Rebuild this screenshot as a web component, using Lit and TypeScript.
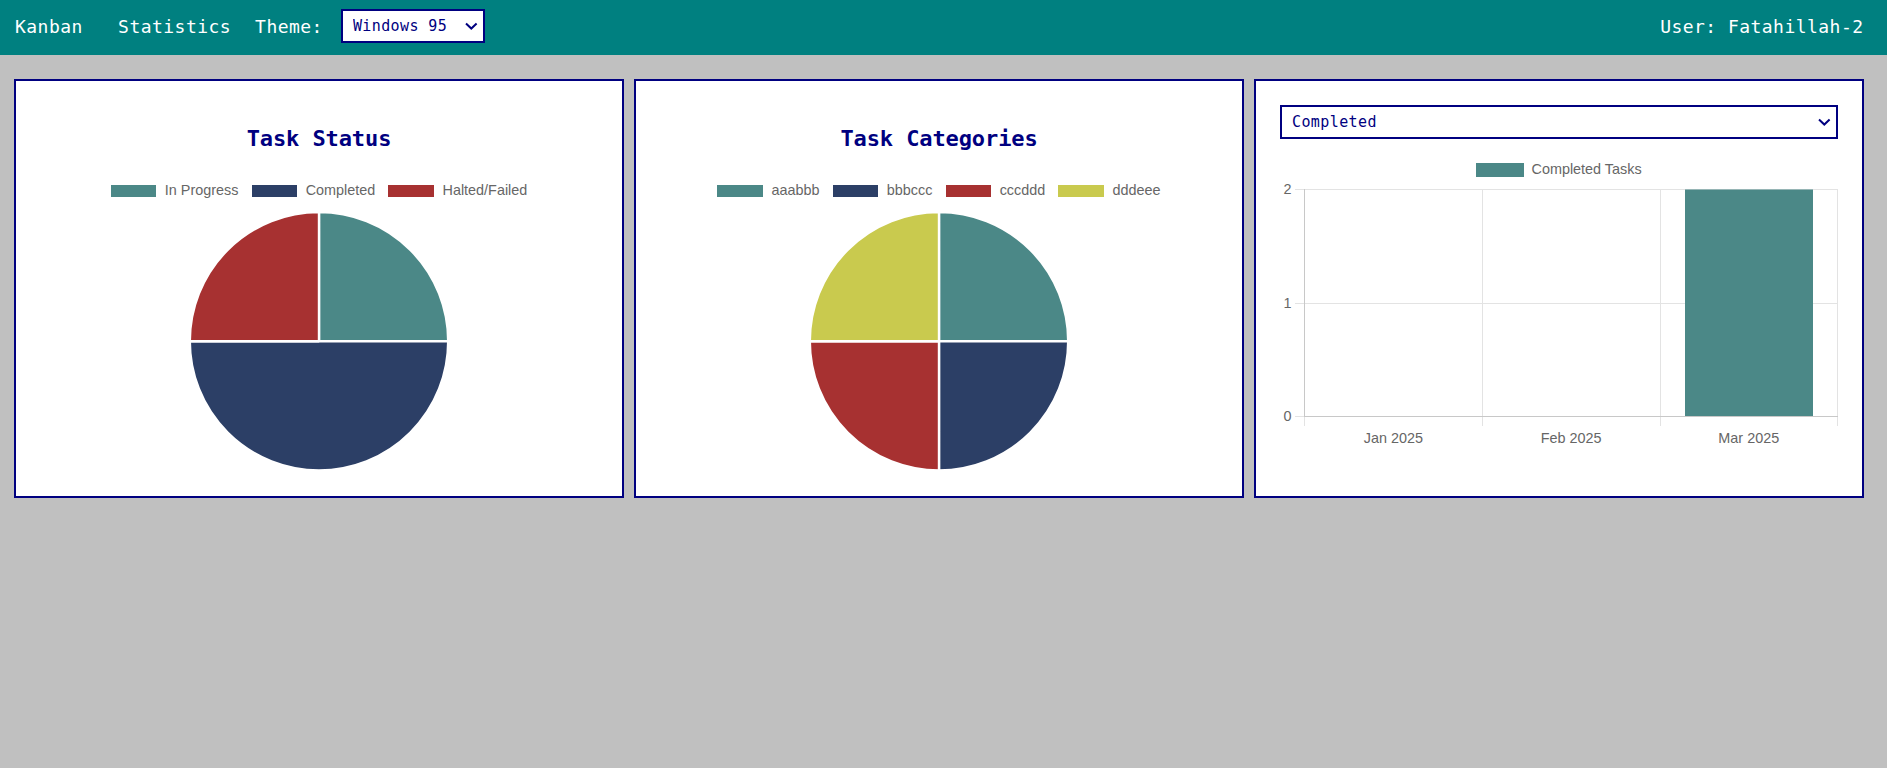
import { LitElement, html, svg, css } from "lit";
import { customElement, property } from "lit/decorators.js";

interface Slice {
  label: string;
  color: string;
  value: number;
}

const TEAL = "#4b8887";
const NAVY = "#2c3f66";
const RED = "#a73131";
const YELLOW = "#c9ca4e";

const statusData: Slice[] = [
  { label: "In Progress", color: TEAL, value: 1 },
  { label: "Completed", color: NAVY, value: 2 },
  { label: "Halted/Failed", color: RED, value: 1 },
];

const categoryData: Slice[] = [
  { label: "aaabbb", color: TEAL, value: 1 },
  { label: "bbbccc", color: NAVY, value: 1 },
  { label: "cccddd", color: RED, value: 1 },
  { label: "dddeee", color: YELLOW, value: 1 },
];

@customElement("retro-select")
class RetroSelect extends LitElement {
  @property({ type: Array }) options: string[] = [];

  static styles = css`
    :host {
      display: block;
      position: relative;
      height: 34px;
    }
    .field {
      appearance: none;
      display: block;
      box-sizing: border-box;
      width: 100%;
      height: 34px;
      margin: 0;
      padding: 0 28px 1px 10px;
      border: 2px solid #000080;
      border-radius: 0;
      background: #fff;
      color: #000080;
      font: 15px "DejaVu Sans Mono", monospace;
      letter-spacing: 0.4px;
    }
    .chevron {
      position: absolute;
      right: 7px;
      top: 13px;
      width: 13px;
      height: 9px;
      pointer-events: none;
    }
  `;

  render() {
    return html`
      <select class="field">
        ${this.options.map((o) => html`<option>${o}</option>`)}
      </select>
      <svg class="chevron" viewBox="0 0 13 9">
        <path d="M1 1.6 L6.3 6.6 L11.6 1.6" fill="none" stroke="#000080" stroke-width="2" />
      </svg>
    `;
  }
}

@customElement("pie-card")
class PieCard extends LitElement {
  @property() heading = "";
  @property({ type: Array }) slices: Slice[] = [];

  static styles = css`
    :host {
      display: flex;
      flex-direction: column;
      align-items: center;
    }
    .title {
      margin: 44px 0 0;
      color: #000080;
      font: bold 22px/28px "DejaVu Sans Mono", monospace;
      letter-spacing: -0.1px;
    }
    .legend {
      display: flex;
      gap: 13.2px;
      margin-top: 28px;
      height: 18px;
      align-items: center;
      white-space: nowrap;
      color: #666;
      font: 14.4px/18px "Liberation Sans", Arial, sans-serif;
    }
    .item {
      display: flex;
      align-items: center;
      gap: 8.4px;
    }
    .swatch {
      width: 45.7px;
      height: 12.3px;
      margin-top: 2px;
    }
    .pie {
      display: block;
      width: 260px;
      height: 260px;
      margin-top: 12px;
    }
  `;

  private arcs() {
    const total = this.slices.reduce((sum, s) => sum + s.value, 0);
    const cx = 130;
    const cy = 130.2;
    const r = 129.2;
    let angle = -Math.PI / 2;
    return this.slices.map((s) => {
      const end = angle + (s.value / total) * Math.PI * 2;
      const x1 = cx + r * Math.cos(angle);
      const y1 = cy + r * Math.sin(angle);
      const x2 = cx + r * Math.cos(end);
      const y2 = cy + r * Math.sin(end);
      angle = end;
      return svg`<path
        d="M${cx} ${cy} L${x1} ${y1} A${r} ${r} 0 0 1 ${x2} ${y2} Z"
        fill=${s.color} stroke="#fff" stroke-width="2.4" stroke-linejoin="bevel" />`;
    });
  }

  render() {
    return html`
      <h2 class="title">${this.heading}</h2>
      <div class="legend">
        ${this.slices.map(
          (s) => html`<div class="item">
            <span class="swatch" style="background:${s.color}"></span><span>${s.label}</span>
          </div>`
        )}
      </div>
      <svg class="pie" viewBox="0 0 260 260">${this.arcs()}</svg>
    `;
  }
}

@customElement("bar-card")
class BarCard extends LitElement {
  @property({ type: Array }) months: string[] = [];
  @property({ type: Array }) values: number[] = [];

  static styles = css`
    :host {
      display: flex;
      flex-direction: column;
      padding: 24px;
    }
    .legend {
      display: flex;
      justify-content: center;
      align-items: center;
      gap: 7.2px;
      height: 18px;
      margin-top: 21px;
      color: #666;
      font: 14.4px/18px "Liberation Sans", Arial, sans-serif;
    }
    .swatch {
      width: 48px;
      height: 14.4px;
      margin-top: 2px;
      background: #4b8887;
    }
    .plot {
      display: block;
      width: 558px;
      height: 272px;
      margin-top: 2px;
    }
    .tick {
      fill: #666;
      font: 14.4px "Liberation Sans", Arial, sans-serif;
    }
  `;

  render() {
    const left = 24.5;
    const step = 177.7;
    const bottom = 236.5;
    const unit = 113.5;
    return html`
      <retro-select .options=${["Completed"]}></retro-select>
      <div class="legend"><span class="swatch"></span><span>Completed Tasks</span></div>
      <svg class="plot" viewBox="0 0 558 272">
        ${[0, 1, 2].map((v) => {
          const y = Math.floor(bottom - v * unit) + 0.5;
          return svg`
            <line x1="15" x2="558" y1=${y} y2=${y} stroke="#e3e3e3" />
            <text class="tick" x="11.6" y=${y + 4.2} text-anchor="end">${v}</text>`;
        })}
        ${[0, 1, 2, 3].map((i) => {
          const x = Math.floor(left + i * step + 0.2) + 0.5;
          return svg`<line x1=${x} x2=${x} y1="9" y2="246" stroke="#e3e3e3" />`;
        })}
        ${this.values.map((v, i) =>
          v
            ? svg`<rect x=${left + i * step + 25.1} y=${bottom - v * unit}
                width="128" height=${v * unit} fill="#4b8887" />`
            : null
        )}
        <line x1=${left} x2=${left} y1="9" y2=${bottom} stroke="#c8c8c8" />
        <line x1="24" x2="558" y1=${bottom} y2=${bottom} stroke="#c8c8c8" />
        ${this.months.map(
          (m, i) =>
            svg`<text class="tick" x=${left + (i + 0.5) * step} y="263.2" text-anchor="middle">${m}</text>`
        )}
      </svg>
    `;
  }
}

@customElement("app-root")
class AppRoot extends LitElement {
  static styles = css`
    :host {
      display: block;
      min-height: 100vh;
      background: #c0c0c0;
    }
    .nav {
      display: flex;
      align-items: center;
      box-sizing: border-box;
      height: 55px;
      padding: 0 23.5px 3px 15px;
      background: #008080;
      color: #fff;
      font: 18px/24px "DejaVu Sans Mono", monospace;
      letter-spacing: 0.46px;
    }
    .text {
      margin-top: 2px;
    }
    .stats {
      margin-left: 35.3px;
    }
    .label {
      margin-left: 24px;
    }
    .theme {
      width: 144px;
      margin-left: 18px;
    }
    .user {
      margin-left: auto;
    }
    .cards {
      display: grid;
      grid-template-columns: repeat(3, 1fr);
      gap: 10px;
      padding: 24px 23px 0 14px;
    }
    .card {
      box-sizing: border-box;
      height: 419px;
      border: 2px solid #000080;
      background: #fff;
    }
  `;

  render() {
    return html`
      <nav class="nav">
        <span class="text">Kanban</span>
        <span class="text stats">Statistics</span>
        <span class="text label">Theme:</span>
        <retro-select class="theme" .options=${["Windows 95"]}></retro-select>
        <span class="text user">User: Fatahillah-2</span>
      </nav>
      <main class="cards">
        <pie-card class="card" heading="Task Status" .slices=${statusData}></pie-card>
        <pie-card class="card" heading="Task Categories" .slices=${categoryData}></pie-card>
        <bar-card
          class="card"
          .months=${["Jan 2025", "Feb 2025", "Mar 2025"]}
          .values=${[0, 0, 2]}
        ></bar-card>
      </main>
    `;
  }
}
